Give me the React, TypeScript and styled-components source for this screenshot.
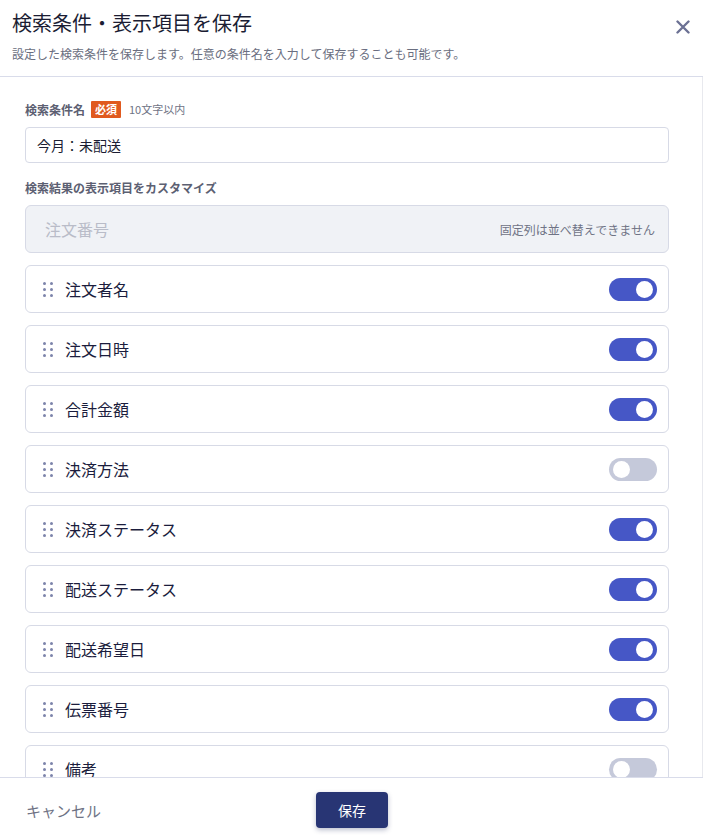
import React from "react";
import styled, { createGlobalStyle } from "styled-components";

const Global = createGlobalStyle`
  html, body { margin: 0; padding: 0; background: #fff; }
  body { font-family: "Noto Sans CJK JP", "Noto Sans", sans-serif; color: #1b1f3b; }
  * { box-sizing: border-box; }
`;

const Dialog = styled.div`
  width: 703px;
  height: 838px;
  display: flex;
  flex-direction: column;
  background: #fff;
  overflow: hidden;
`;

const Header = styled.header`
  height: 77px;
  flex: none;
  border-bottom: 1px solid #d9dcea;
  padding: 9px 12px 0 12px;
  display: flex;
  justify-content: space-between;
  align-items: flex-start;
`;

const HeaderText = styled.div`
  display: flex;
  flex-direction: column;
  gap: 8px;
`;

const Title = styled.h1`
  margin: 0;
  font-size: 20px;
  font-weight: 400;
  line-height: 28px;
  color: #1b1d33;
`;

const Subtitle = styled.p`
  margin: 0;
  font-size: 12px;
  line-height: 18px;
  color: #6a6e80;
`;

const CloseButton = styled.button`
  border: none;
  background: none;
  padding: 0;
  margin: 9px -1px 0 0;
  width: 18px;
  height: 18px;
  display: flex;
  align-items: center;
  justify-content: center;
  cursor: pointer;
`;

const Body = styled.main`
  flex: 1;
  min-height: 0;
  overflow: hidden;
  border-right: 1px solid #e8e9ee;
  padding: 23px 33px 0 25px;
  display: flex;
  flex-direction: column;
  & > * { flex: none; }
`;

const FieldLabel = styled.div`
  display: flex;
  align-items: center;
  gap: 6px;
  height: 18px;
  font-size: 12px;
  font-weight: 700;
  color: #5c6072;
`;

const Required = styled.span`
  background: #e05a1f;
  color: #fff;
  font-size: 11px;
  font-weight: 700;
  line-height: 17px;
  padding: 0 4px;
  border-radius: 1px;
`;

const Hint = styled.span`
  font-size: 11px;
  font-weight: 400;
  color: #6f7385;
  margin-left: 2px;
`;

const TextInput = styled.input`
  margin-top: 9px;
  height: 36px;
  width: 100%;
  border: 1px solid #d7dae6;
  border-radius: 4px;
  padding: 0 11px;
  font-family: inherit;
  font-size: 14px;
  color: #1b1d33;
  outline: none;
`;

const SectionLabel = styled(FieldLabel)`
  margin-top: 15px;
`;

const List = styled.div`
  margin-top: 9px;
  display: flex;
  flex-direction: column;
  gap: 12px;
`;

const FixedRow = styled.div`
  height: 48px;
  flex: none;
  border: 1px solid #d7dae6;
  border-radius: 6px;
  background: #f0f2f6;
  display: flex;
  align-items: center;
  justify-content: space-between;
  padding: 0 13px 0 19px;
`;

const FixedName = styled.span`
  font-size: 16px;
  color: #b9bcc8;
`;

const FixedNote = styled.span`
  font-size: 12px;
  color: #6f7385;
`;

const Row = styled.div`
  height: 48px;
  flex: none;
  border: 1px solid #d7dae6;
  border-radius: 6px;
  background: #fff;
  display: flex;
  align-items: center;
  padding: 0 11px 0 17px;
`;

const Handle = styled.span`
  display: grid;
  grid-template-columns: 3px 3px;
  grid-auto-rows: 3px;
  column-gap: 4px;
  row-gap: 3px;
  margin-right: 12px;
  & > i {
    width: 3px;
    height: 3px;
    border-radius: 50%;
    background: #7d84ab;
  }
`;

const RowName = styled.span`
  flex: 1;
  font-size: 16px;
  color: #1b1d3d;
`;

const Toggle = styled.span<{ $on: boolean }>`
  width: 48px;
  height: 23px;
  border-radius: 12px;
  background: ${(p) => (p.$on ? "#4657c6" : "#c5c9da")};
  display: flex;
  align-items: center;
  justify-content: ${(p) => (p.$on ? "flex-end" : "flex-start")};
  padding: 0 4px;
  & > i {
    width: 17px;
    height: 17px;
    border-radius: 50%;
    background: #fff;
  }
`;

const Footer = styled.footer`
  height: 61px;
  flex: none;
  border-top: 1px solid #d9dcea;
  display: grid;
  grid-template-columns: 1fr auto 1fr;
  align-items: center;
  padding: 0 26px;
`;

const CancelButton = styled.button`
  justify-self: start;
  border: none;
  background: none;
  padding: 0;
  margin-top: 4px;
  font-family: inherit;
  font-size: 15px;
  color: #6f7385;
  cursor: pointer;
`;

const SaveButton = styled.button`
  width: 72px;
  height: 36px;
  margin-top: 4px;
  margin-left: 1px;
  border: none;
  border-radius: 4px;
  background: #283574;
  color: #fff;
  font-family: inherit;
  font-size: 14px;
  box-shadow: 0 2px 5px rgba(30, 40, 90, 0.3);
  cursor: pointer;
`;

const items: { name: string; on: boolean }[] = [
  { name: "注文者名", on: true },
  { name: "注文日時", on: true },
  { name: "合計金額", on: true },
  { name: "決済方法", on: false },
  { name: "決済ステータス", on: true },
  { name: "配送ステータス", on: true },
  { name: "配送希望日", on: true },
  { name: "伝票番号", on: true },
  { name: "備考", on: false },
];

export default function App() {
  return (
    <>
      <Global />
      <Dialog>
        <Header>
          <HeaderText>
            <Title>検索条件・表示項目を保存</Title>
            <Subtitle>設定した検索条件を保存します。任意の条件名を入力して保存することも可能です。</Subtitle>
          </HeaderText>
          <CloseButton aria-label="閉じる">
            <svg width="14" height="14" viewBox="0 0 14 14">
              <path d="M1.5 1.5 L12.5 12.5 M12.5 1.5 L1.5 12.5" stroke="#6c7194" strokeWidth="2.4" strokeLinecap="round" />
            </svg>
          </CloseButton>
        </Header>
        <Body>
          <FieldLabel>
            検索条件名<Required>必須</Required>
            <Hint>10文字以内</Hint>
          </FieldLabel>
          <TextInput defaultValue="今月：未配送" />
          <SectionLabel>検索結果の表示項目をカスタマイズ</SectionLabel>
          <List>
            <FixedRow>
              <FixedName>注文番号</FixedName>
              <FixedNote>固定列は並べ替えできません</FixedNote>
            </FixedRow>
            {items.map((it) => (
              <Row key={it.name}>
                <Handle>
                  <i /><i /><i /><i /><i /><i />
                </Handle>
                <RowName>{it.name}</RowName>
                <Toggle $on={it.on}>
                  <i />
                </Toggle>
              </Row>
            ))}
          </List>
        </Body>
        <Footer>
          <CancelButton>キャンセル</CancelButton>
          <SaveButton>保存</SaveButton>
          <span />
        </Footer>
      </Dialog>
    </>
  );
}
